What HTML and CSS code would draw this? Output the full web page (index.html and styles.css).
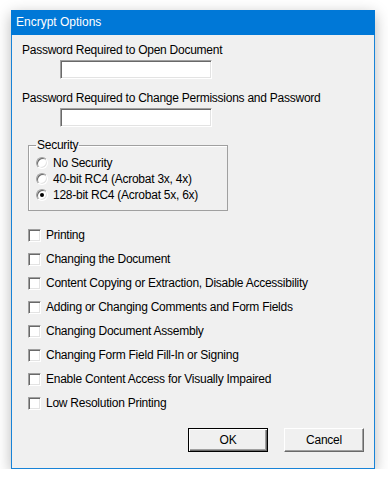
FILE: index.html
```html
<!DOCTYPE html>
<html lang="en">
<head>
    <meta charset="UTF-8">
    <meta name="viewport" content="width=device-width, initial-scale=1.0">
    <title>Encrypt Options</title>
    <link rel="stylesheet" href="styles.css">
</head>
<body>
    <!-- Dialog window -->
    <div class="window">
        <div class="titlebar">Encrypt Options</div>

        <div class="content">
            <div class="label">Password Required to Open Document</div>
            <div class="field"></div>

            <div class="label label-second">Password Required to Change Permissions and Password</div>
            <div class="field"></div>

            <fieldset class="group">
                <legend>Security</legend>
                <div class="radio-row">
                    <span class="radio"></span>
                    <span>No Security</span>
                </div>
                <div class="radio-row">
                    <span class="radio"></span>
                    <span>40-bit RC4 (Acrobat 3x, 4x)</span>
                </div>
                <div class="radio-row">
                    <span class="radio checked"></span>
                    <span>128-bit RC4 (Acrobat 5x, 6x)</span>
                </div>
            </fieldset>

            <div class="checks">
                <div class="check-row"><span class="check"></span><span>Printing</span></div>
                <div class="check-row"><span class="check"></span><span>Changing the Document</span></div>
                <div class="check-row"><span class="check"></span><span>Content Copying or Extraction, Disable Accessibility</span></div>
                <div class="check-row"><span class="check"></span><span>Adding or Changing Comments and Form Fields</span></div>
                <div class="check-row"><span class="check"></span><span>Changing Document Assembly</span></div>
                <div class="check-row"><span class="check"></span><span>Changing Form Field Fill-In or Signing</span></div>
                <div class="check-row"><span class="check"></span><span>Enable Content Access for Visually Impaired</span></div>
                <div class="check-row"><span class="check"></span><span>Low Resolution Printing</span></div>
            </div>

            <div class="buttons">
                <div class="button default">OK</div>
                <div class="button">Cancel</div>
            </div>
        </div>
    </div>
</body>
</html>
```

FILE: styles.css
```css
/* Page and window frame */
body {
    margin: 0;
    background-color: #fff;
    font-family: "Liberation Sans", Arial, sans-serif;
    font-size: 12px;
    color: #000;
}

.window {
    width: 362px;
    margin: 10px 0 0 11px;
    border: 1px solid #1883d7;
    border-top: none;
    background-color: #f0f0f0;
    box-shadow: 0px 4px 14px rgba(0, 0, 0, 0.28);
}

.titlebar {
    height: 25px;
    line-height: 25px;
    margin: 0 -1px;
    padding-left: 5px;
    background-color: #0078d7;
    color: #fff;
}

.content {
    padding: 8px 10px 16px 10px;
    letter-spacing: -0.25px;
}

/* Password fields */
.label {
    line-height: 14px;
}

.label-second {
    margin-top: 12px;
}

.field {
    width: 150px;
    height: 17px;
    margin: 3px 0 0 38px;
    background-color: #fff;
    border-top: 1px solid #a0a0a0;
    border-left: 1px solid #a0a0a0;
    border-right: 1px solid #fff;
    border-bottom: 1px solid #fff;
    box-shadow: inset 1px 1px 0 #696969, inset -1px -1px 0 #e3e3e3;
}

/* Security group box */
.group {
    width: 184px;
    margin: 11px 0 0 6px;
    padding: 3px 7px 7px 7px;
    border: 1px solid #a0a0a0;
    box-shadow: inset 1px 1px 0 #fff;
}

.group legend {
    padding: 0 1px;
    line-height: 14px;
}

.radio-row {
    display: flex;
    align-items: center;
    gap: 5px;
    height: 16px;
}

.radio {
    width: 12px;
    height: 12px;
    box-sizing: border-box;
    border-radius: 50%;
    border: 1px solid;
    border-color: #a0a0a0 #fff #fff #a0a0a0;
    background-color: #fff;
    box-shadow: inset 1px 1px 0 #696969, inset -1px -1px 0 #e3e3e3;
    position: relative;
}

.radio.checked::after {
    content: "";
    position: absolute;
    left: 3px;
    top: 3px;
    width: 4px;
    height: 4px;
    border-radius: 50%;
    background-color: #000;
}

/* Permission checkboxes */
.checks {
    margin: 12px 0 0 6px;
}

.check-row {
    display: flex;
    align-items: center;
    gap: 5px;
    height: 24px;
}

.check {
    width: 13px;
    height: 13px;
    box-sizing: border-box;
    border-top: 1px solid #a0a0a0;
    border-left: 1px solid #a0a0a0;
    border-right: 1px solid #fff;
    border-bottom: 1px solid #fff;
    background-color: #fff;
    box-shadow: inset 1px 1px 0 #696969, inset -1px -1px 0 #e3e3e3;
}

/* Dialog buttons */
.buttons {
    display: flex;
    justify-content: flex-end;
    gap: 16px;
    margin-top: 13px;
}

.button {
    width: 80px;
    height: 24px;
    box-sizing: border-box;
    line-height: 22px;
    text-align: center;
    background-color: #f0f0f0;
    border-top: 1px solid #fff;
    border-left: 1px solid #fff;
    border-right: 1px solid #696969;
    border-bottom: 1px solid #696969;
    box-shadow: inset -1px -1px 0 #a0a0a0;
}

.button.default {
    border: 1px solid #000;
    box-shadow: inset 1px 1px 0 #fff, inset -1px -1px 0 #696969, inset -2px -2px 0 #a0a0a0;
}
```
